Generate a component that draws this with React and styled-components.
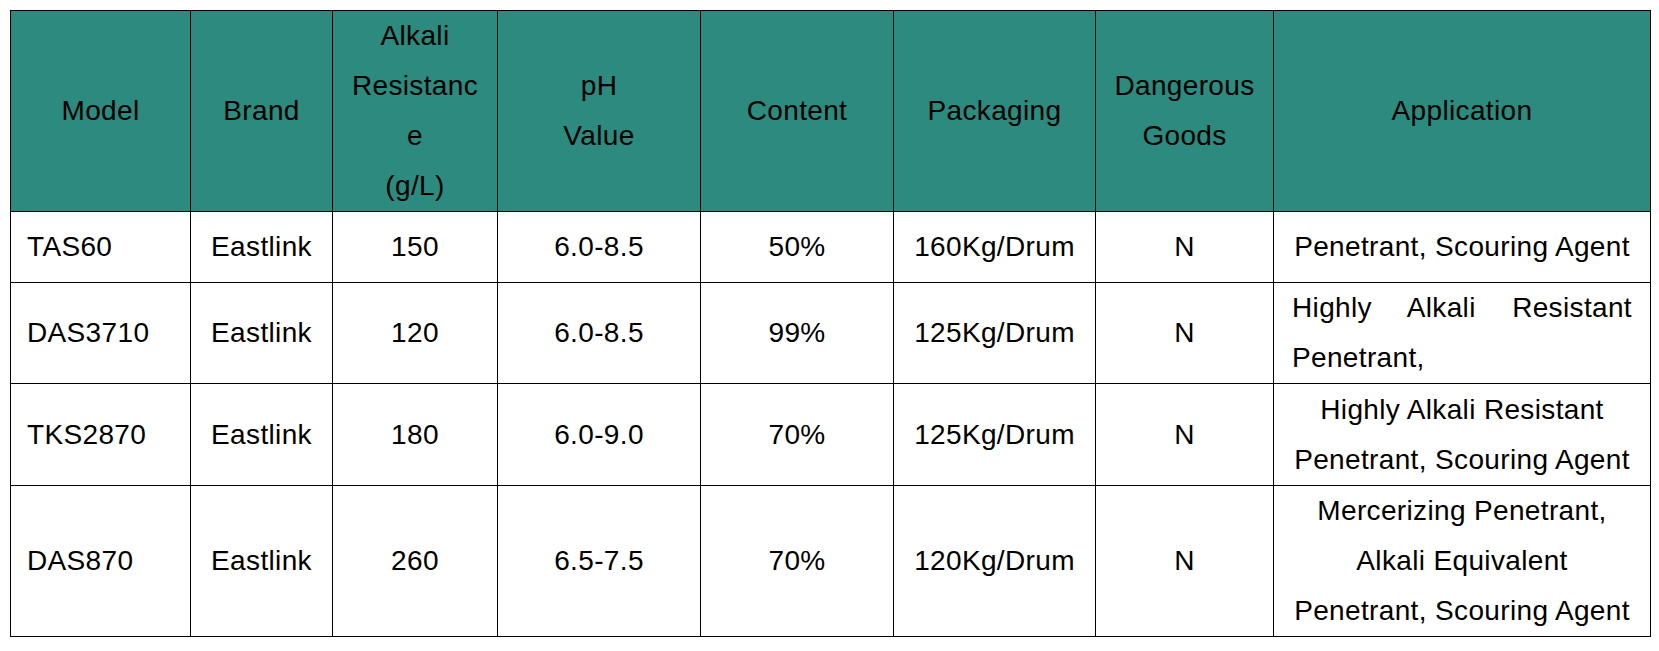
import React from 'react';
import styled, { createGlobalStyle } from 'styled-components';

const GlobalStyle = createGlobalStyle`
    body {
        margin: 0;
        background: #ffffff;
        font-family: "Liberation Sans", Arial, sans-serif;
        color: #000000;
    }
`

/* layout */
const Page = styled.div`
    padding: 10px;
`

/* styled table */
const Table = styled.table`
    width: 1640px;
    table-layout: fixed;
    border-collapse: collapse;
    font-size: 28px;
    letter-spacing: 0.35px;
    line-height: 50px;
`

const Col = styled.col`
    width: ${(p) => p.$w}px;
`

const HeadCell = styled.th`
    height: 200px;
    padding: 0 12px;
    background-color: #2c8a7e;
    border: 1px solid #000000;
    font-weight: normal;
    text-align: center;
    vertical-align: middle;
`

const Cell = styled.td`
    height: ${(p) => p.$h}px;
    padding: 0 ${(p) => (p.$justify ? 18 : 16)}px;
    border: 1px solid #000000;
    text-align: ${(p) => (p.$justify ? 'justify' : p.$left ? 'left' : 'center')};
    text-align-last: ${(p) => (p.$justify ? 'left' : 'auto')};
    vertical-align: middle;
`

const widths = [180, 142, 165, 203, 193, 202, 178, 377];

const headers = [
    ['Model'],
    ['Brand'],
    ['Alkali', 'Resistanc', 'e', '(g/L)'],
    ['pH', 'Value'],
    ['Content'],
    ['Packaging'],
    ['Dangerous', 'Goods'],
    ['Application'],
];

const rows = [
    {
        height: 70,
        cells: ['TAS60', 'Eastlink', '150', '6.0-8.5', '50%', '160Kg/Drum', 'N'],
        app: ['Penetrant, Scouring Agent'],
    },
    {
        height: 100,
        cells: ['DAS3710', 'Eastlink', '120', '6.0-8.5', '99%', '125Kg/Drum', 'N'],
        app: ['Highly Alkali Resistant Penetrant,'],
        justify: true,
    },
    {
        height: 101,
        cells: ['TKS2870', 'Eastlink', '180', '6.0-9.0', '70%', '125Kg/Drum', 'N'],
        app: ['Highly Alkali Resistant', 'Penetrant, Scouring Agent'],
    },
    {
        height: 150,
        cells: ['DAS870', 'Eastlink', '260', '6.5-7.5', '70%', '120Kg/Drum', 'N'],
        app: ['Mercerizing Penetrant,', 'Alkali Equivalent', 'Penetrant, Scouring Agent'],
    },
];

// join lines with explicit breaks, like the source document
const lines = (parts) =>
    parts.map((text, idx) => (
        <React.Fragment key={idx}>
            {idx > 0 && <br />}
            {text}
        </React.Fragment>
    ));

const App = () => {
    return (
        <Page>
            <GlobalStyle />
            <Table>
                <colgroup>
                    {widths.map((w, idx) => <Col key={idx} $w={w} />)}
                </colgroup>
                <thead>
                    <tr>
                        {headers.map((h, idx) => <HeadCell key={idx}>{lines(h)}</HeadCell>)}
                    </tr>
                </thead>
                <tbody>
                    {rows.map((row) => (
                        <tr key={row.cells[0]}>
                            {row.cells.map((text, idx) => (
                                <Cell key={idx} $h={row.height} $left={idx === 0}>{text}</Cell>
                            ))}
                            <Cell $h={row.height} $justify={row.justify}>{lines(row.app)}</Cell>
                        </tr>
                    ))}
                </tbody>
            </Table>
        </Page>
    )
}

export default App;
